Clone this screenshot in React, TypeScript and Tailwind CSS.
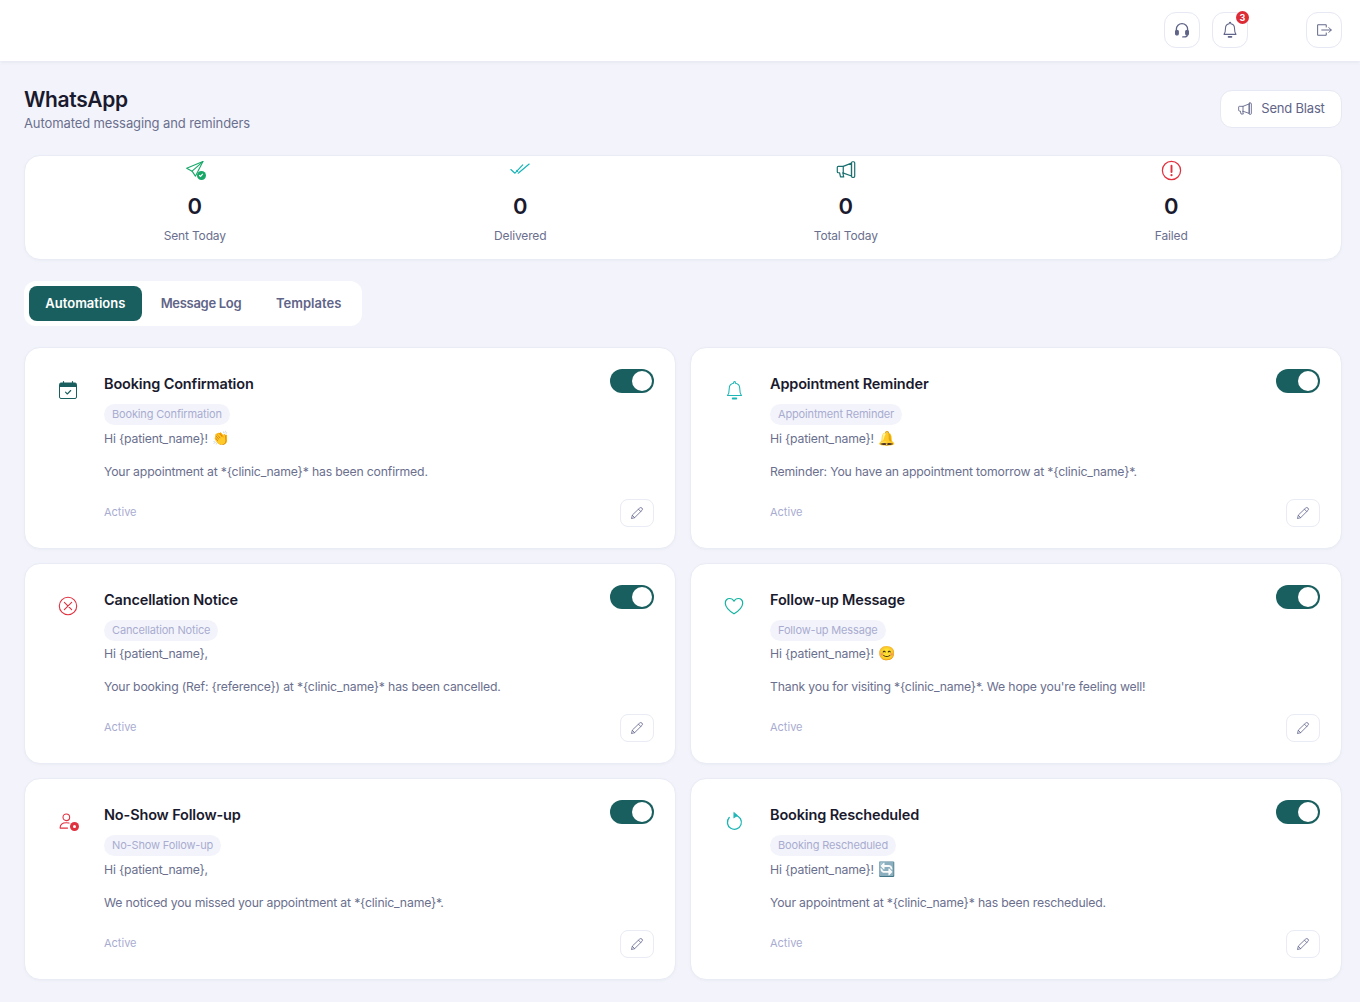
import React from 'react';

const Icon: React.FC<{ size?: number; className?: string; sw?: number; children: React.ReactNode }> = ({ size = 20, className, sw = 1.4, children }) => (
  <svg width={size} height={size} viewBox="0 0 24 24" fill="none" stroke="currentColor" strokeWidth={sw} strokeLinecap="round" strokeLinejoin="round" className={className}>
    {children}
  </svg>
);

const HeadsetIcon = () => (
  <Icon size={18} sw={1.7}>
    <path d="M4.5 14v-3a7.5 7.5 0 0 1 15 0v3" />
    <rect x="3.5" y="12.5" width="3.5" height="6" rx="1.6" fill="currentColor" />
    <rect x="17" y="12.5" width="3.5" height="6" rx="1.6" fill="currentColor" />
    <path d="M19 18.5c0 2-2 2.7-4 2.7h-2" />
  </Icon>
);

const BellIcon = ({ size = 18, sw = 1.4 }: { size?: number; sw?: number }) => (
  <Icon size={size} sw={sw}>
    <path d="M12 1.800a1 1 0 0 1 1 1v1a6 6 0 0 1 5 5.900c0 4.200.6 6.300 2 8.100H4c1.400-1.800 2-3.900 2-8.100a6 6 0 0 1 5-5.900v-1a1 1 0 0 1 1-1z" />
    <path d="M10 21.200h4" strokeWidth={2.200} />
  </Icon>
);

const LogoutIcon = () => (
  <Icon size={18} sw={1.3}>
    <path d="M15 8V5H3.500v14H15v-3" />
    <path d="M9 12h12.500M18.500 8.800l3.200 3.200-3.200 3.200" />
  </Icon>
);

const MegaphoneIcon = ({ size = 18, sw = 1.4 }: { size?: number; sw?: number }) => (
  <Icon size={size} sw={sw}>
    <path d="M18 4.500 9 8H3.500a1 1 0 0 0-1 1v5a1 1 0 0 0 1 1H5l1 4.500h3.500L8.500 15.200 18 18.500z" />
    <rect x="18" y="3" width="3.500" height="17" rx="1.200" />
    <path d="M9 8v7" />
  </Icon>
);

const SentIcon = () => (
  <span className="relative mt-[-3px] flex h-5 w-5 text-[#17a868]">
    <Icon size={21} sw={1.300}>
      <path d="M21.500 2.500 2 10.500l6.500 3.500 4 6z" />
      <path d="M21.500 2.500 8.500 14" />
    </Icon>
    <span className="absolute right-[-1px] bottom-[-1px] flex h-[9px] w-[9px] items-center justify-center rounded-full bg-[#17a868]">
      <svg width="6" height="6" viewBox="0 0 10 10" fill="none" stroke="#fff" strokeWidth="2"><path d="M2 5.500 4.200 7.500 8 3" /></svg>
    </span>
  </span>
);

const DeliveredIcon = () => (
  <Icon size={22} sw={1.300} className="text-[#17b4b8]">
    <path d="M2 11.500 6.500 15.500 15 6.500" />
    <path d="M10 15.500 11 14.800 22 5.500" />
    <path d="M8.500 12.500 9.500 13.500" />
  </Icon>
);

const AlertIcon = () => (
  <Icon size={23} sw={1.300} className="text-[#e0313f]">
    <circle cx="12" cy="12" r="9.500" />
    <path d="M12 7v6.500" strokeWidth={2} />
    <path d="M12 16.800v.2" strokeWidth={2.200} />
  </Icon>
);

const CalendarIcon = () => (
  <svg width="20" height="20" viewBox="0 0 20 20" fill="none" className="text-[#1a5f5f]">
    <path d="M1.500 4.500a1.500 1.500 0 0 1 1.500-1.500h14a1.500 1.500 0 0 1 1.500 1.500V7h-17z" fill="currentColor" />
    <rect x="1.500" y="3" width="17" height="15.500" rx="1.500" stroke="currentColor" strokeWidth="1" />
    <path d="M5.500 1.500V3.500M14.500 1.500V3.500" stroke="currentColor" strokeWidth="1.200" strokeLinecap="round" />
    <path d="M7.500 12.200 9.300 14l3.400-3.500" stroke="currentColor" strokeWidth="1.100" strokeLinecap="round" strokeLinejoin="round" />
  </svg>
);

const CancelIcon = () => (
  <Icon size={22} sw={1.200} className="text-[#e0313f]">
    <circle cx="12" cy="12" r="9.500" />
    <path d="m8 8 8 8M16 8l-8 8" />
  </Icon>
);

const HeartIcon = () => (
  <Icon size={22} sw={1.300} className="text-[#14b3a0]">
    <path d="M12 20.500S3 15 2.500 9.200C2.200 5.800 4.700 3.800 7.200 3.800c2 0 3.800 1.100 4.800 3 1-1.900 2.800-3 4.800-3 2.500 0 5 2 4.700 5.400C21 15 12 20.500 12 20.500z" />
  </Icon>
);

const NoShowIcon = () => (
  <span className="relative flex h-5 w-5 text-[#e0313f]">
    <Icon size={20} sw={1.300}>
      <circle cx="10" cy="7.500" r="4" />
      <path d="M2.500 20.500c0-4 3-6.500 7.500-6.500 1.200 0 2.300.2 3.200.5M2.500 20.500h9" />
    </Icon>
    <span className="absolute right-[-1px] bottom-[0px] flex h-[9px] w-[9px] items-center justify-center rounded-full bg-[#e0313f]">
      <span className="h-[3px] w-[3px] rounded-full bg-white" />
    </span>
  </span>
);

const RotateIcon = () => (
  <Icon size={21} sw={1.500} className="text-[#1cb5b5]">
    <path d="M13 5a8 8 0 1 1-7 2.500" />
    <path d="M11.500 1.800 15.500 5l-4 2.800z" fill="currentColor" strokeWidth={0.8} />
  </Icon>
);

const PencilIcon = () => (
  <Icon size={14} sw={1.500} className="text-[#6b6f96]">
    <path d="M16.500 3.500a2.500 2.500 0 0 1 4 4L8 20l-5.500 1.500L4 16z" />
    <path d="m14.500 5.500 4 4" />
    <path d="M4 16l4 4" />
  </Icon>
);

const stats = [
  { icon: <SentIcon />, value: '0', label: 'Sent Today' },
  { icon: <DeliveredIcon />, value: '0', label: 'Delivered' },
  { icon: <span className="text-[#1a6f6f]"><MegaphoneIcon size={22} sw={1.300} /></span>, value: '0', label: 'Total Today' },
  { icon: <AlertIcon />, value: '0', label: 'Failed' },
];

const automations = [
  { title: 'Booking Confirmation', icon: <CalendarIcon />, greeting: 'Hi {patient_name}!', emoji: '👏', body: 'Your appointment at *{clinic_name}* has been confirmed.' },
  { title: 'Appointment Reminder', icon: <span className="text-[#1cb5b5]"><BellIcon size={21} sw={1.200} /></span>, greeting: 'Hi {patient_name}!', emoji: '🔔', body: 'Reminder: You have an appointment tomorrow at *{clinic_name}*.' },
  { title: 'Cancellation Notice', icon: <CancelIcon />, greeting: 'Hi {patient_name},', emoji: '', body: 'Your booking (Ref: {reference}) at *{clinic_name}* has been cancelled.' },
  { title: 'Follow-up Message', icon: <HeartIcon />, greeting: 'Hi {patient_name}!', emoji: '😊', body: "Thank you for visiting *{clinic_name}*. We hope you're feeling well!" },
  { title: 'No-Show Follow-up', icon: <NoShowIcon />, greeting: 'Hi {patient_name},', emoji: '', body: 'We noticed you missed your appointment at *{clinic_name}*.' },
  { title: 'Booking Rescheduled', icon: <RotateIcon />, greeting: 'Hi {patient_name}!', emoji: '🔄', body: 'Your appointment at *{clinic_name}* has been rescheduled.' },
];

const AutomationCard: React.FC<(typeof automations)[number]> = ({ title, icon, greeting, emoji, body }) => (
  <div className="flex h-[201.500px] gap-[14px] rounded-2xl border border-[#e9ebf5] bg-white pt-[21px] pb-[21px] pl-[21px] pr-[21px] shadow-[0_1px_3px_rgba(30,40,90,0.04)]">
    <div className="mt-[-1px] flex h-[44px] w-[44px] shrink-0 items-center justify-center">{icon}</div>
    <div className="flex min-w-0 flex-1 flex-col">
      <div className="flex items-start justify-between">
        <div className="pt-[5px] text-[14.500px] leading-[20px] font-semibold tracking-[-0.15px] text-[#1a1a2e]">{title}</div>
        <div className="flex h-[24px] w-[44px] items-center justify-end rounded-full bg-[#1a5f5f] pr-[2px]">
          <span className="h-[20px] w-[20px] rounded-full bg-white" />
        </div>
      </div>
      <div className="mt-[6px]">
        <span className="inline-block rounded-full bg-[#f3f4fb] px-2 text-[11px] leading-[21px] tracking-[-0.15px] text-[#a9acd0]">{title}</span>
      </div>
      <div className="mt-[5.500px] text-[12.250px] leading-[16.500px] tracking-[-0.18px] text-[#6b6f8e]">
        <p>
          {greeting}
          {emoji && <span className="ml-[4px] text-[14px] leading-none">{emoji}</span>}
        </p>
        <p className="mt-[16.500px]">{body}</p>
      </div>
      <div className="mt-auto flex items-end justify-between">
        <span className="pb-[7px] text-[11px] leading-[16px] text-[#a9acd0]">Active</span>
        <button className="flex h-[28px] w-[34px] items-center justify-center rounded-lg border border-[#e9ebf5] bg-white">
          <PencilIcon />
        </button>
      </div>
    </div>
  </div>
);

const App: React.FC = () => {
  return (
    <div className="min-h-[1002px] bg-[#f3f4fb] font-['Inter',sans-serif]">
      <header className="flex h-[61px] items-start justify-end bg-white pt-[12px] pr-[18px] shadow-[0_1px_4px_rgba(30,40,90,0.08)]">
        <button className="flex h-9 w-9 items-center justify-center rounded-xl border border-[#e6e8f3] text-[#5f6488]">
          <HeadsetIcon />
        </button>
        <button className="relative ml-3 flex h-9 w-9 items-center justify-center rounded-xl border border-[#e6e8f3] text-[#5f6488]">
          <BellIcon />
          <span className="absolute top-[-2px] right-[-2px] flex h-[13px] w-[13px] items-center justify-center rounded-full bg-[#dc2b35] text-[9px] leading-none font-bold text-white">3</span>
        </button>
        <button className="ml-[58px] flex h-9 w-9 items-center justify-center rounded-xl border border-[#e6e8f3] text-[#5f6488]">
          <LogoutIcon />
        </button>
      </header>

      <main className="px-6 pt-[29px] pb-[22px] pr-[18px]">
        <div className="flex items-start justify-between">
          <div>
            <h1 className="text-[21px] leading-[20px] font-semibold tracking-[-0.35px] text-[#1a1a2e]">WhatsApp</h1>
            <p className="mt-[3px] text-[13px] leading-[20px] tracking-[-0.1px] text-[#6b6f8e]">Automated messaging and reminders</p>
          </div>
          <button className="flex h-[38px] w-[122px] items-center justify-center gap-2 rounded-xl border border-[#e6e8f3] bg-white text-[13px] tracking-[-0.2px] text-[#5f6488]">
            <MegaphoneIcon size={16} sw={1.300} />
            Send Blast
          </button>
        </div>

        <div className="mt-[22px] grid h-[105px] grid-cols-4 rounded-2xl border border-[#e9ebf5] bg-white px-[7px] pt-[2px] shadow-[0_1px_3px_rgba(30,40,90,0.04)]">
          {stats.map(stat => (
            <div key={stat.label} className="flex flex-col items-center">
              <div className="flex h-[24px] items-center justify-center">{stat.icon}</div>
              <div className="mt-[10px] text-[22px] leading-[28px] font-semibold text-[#1a1a2e]">{stat.value}</div>
              <div className="mt-[7px] text-[12px] leading-[18px] tracking-[-0.15px] text-[#6b6f8e]">{stat.label}</div>
            </div>
          ))}
        </div>

        <div className="mt-[21px] flex h-[45px] w-[338px] items-center gap-[3px] rounded-xl bg-white p-[5px] text-[13px]">
          <div className="flex h-[35px] w-[113px] items-center justify-center rounded-lg bg-[#1a5f5f] font-semibold text-white">Automations</div>
          <div className="flex h-[35px] w-[113px] items-center justify-center font-semibold tracking-[-0.3px] text-[#5f6488]">Message Log</div>
          <div className="flex h-[35px] w-[97px] items-center justify-center font-semibold text-[#5f6488]">Templates</div>
        </div>

        <div className="mt-[21px] grid grid-cols-2 gap-[14px]">
          {automations.map(item => (
            <AutomationCard key={item.title} {...item} />
          ))}
        </div>
      </main>
    </div>
  );
};

export default App;
